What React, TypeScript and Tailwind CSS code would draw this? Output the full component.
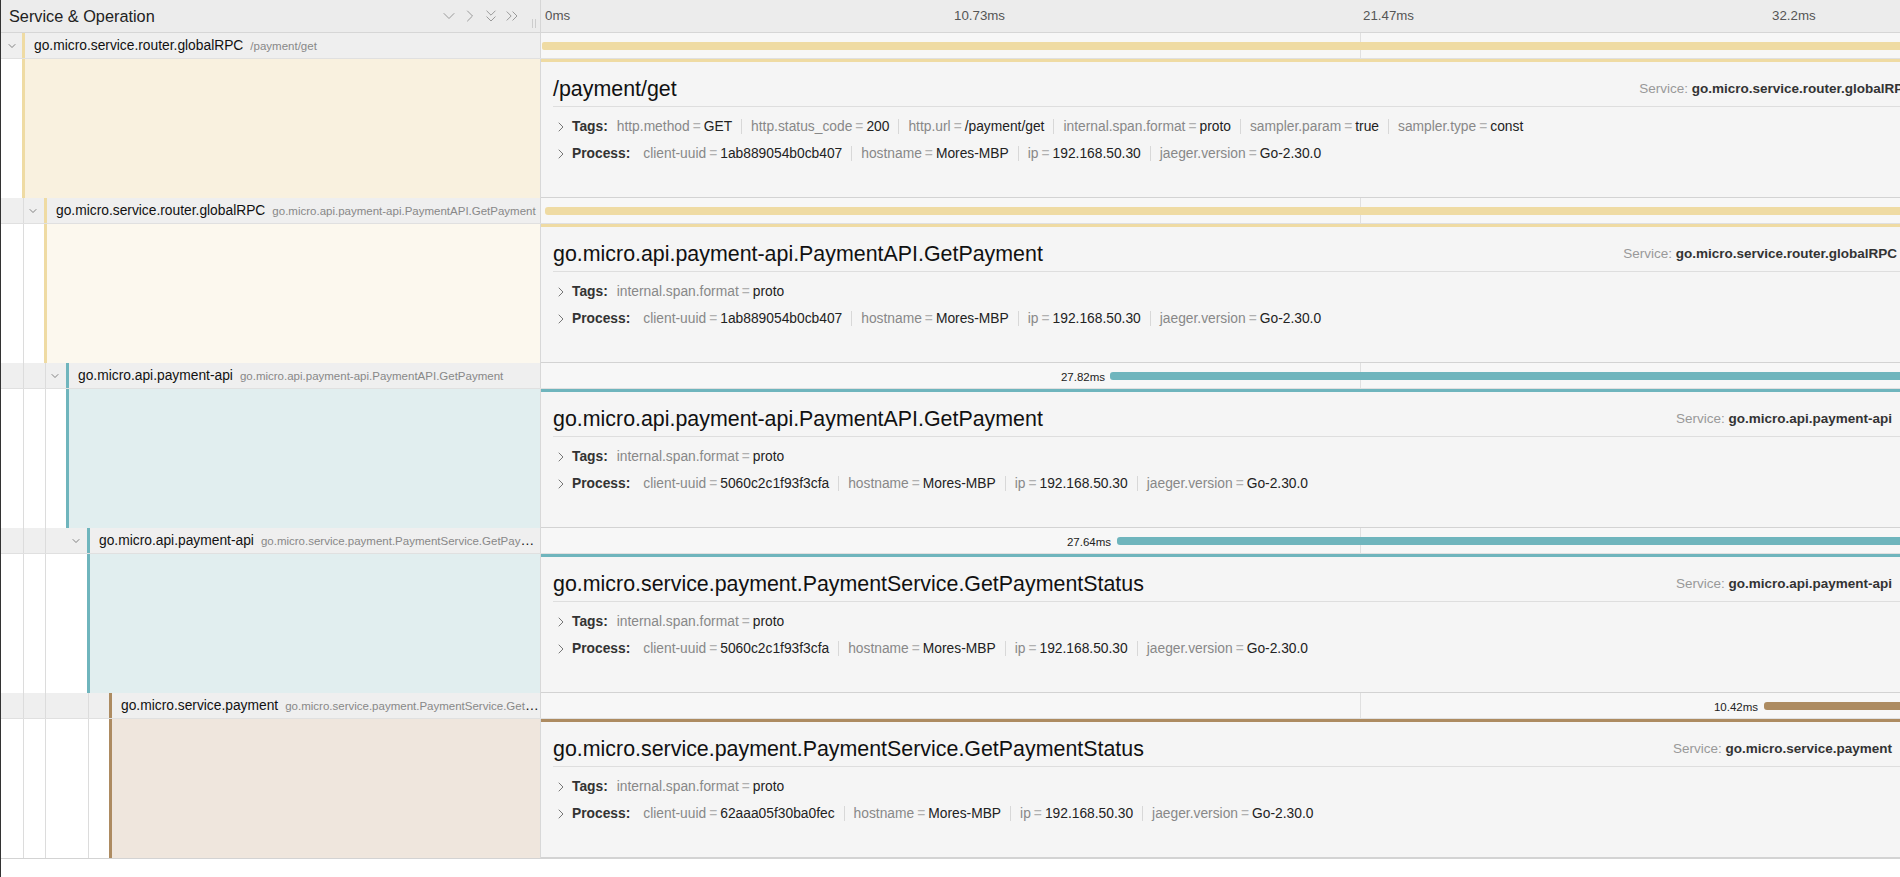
import React from "react";
import { ChevronDown, ChevronRight, ChevronsDown, ChevronsRight } from "lucide-react";

type KV = [string, string];

const Guide = () => <div className="w-px shrink-0 self-stretch bg-[#dcdcdc]" />;
const Sp = ({ w }: { w: string }) => <div className={`${w} shrink-0 self-stretch`} />;
const Bar = ({ c }: { c: string }) => <div className={`w-[3px] shrink-0 self-stretch ${c}`} />;
const Tint = ({ c }: { c: string }) => <div className={`flex-1 self-stretch ${c}`} />;

const Chev = () => (
  <div className="flex w-[12px] shrink-0 items-center justify-center">
    <ChevronDown size={12} strokeWidth={1.6} className="shrink-0 text-[#666]" />
  </div>
);

const RowText = ({ service, op }: { service: string; op: string }) => (
  <div className="ml-[9px] min-w-0 flex-1 truncate text-[13.8px] leading-[25px] text-[#111]">
    {service}
    <span className="ml-[7px] text-[11.5px] text-[#888]">{op}</span>
  </div>
);

const SpanRow = ({ left, timeline }: { left: React.ReactNode; timeline: React.ReactNode }) => (
  <div className="flex h-[26px] shrink-0 border-b border-[#e0e0e0]">
    <div className="flex w-[540px] shrink-0 items-center border-r border-[#d8d8d8] bg-[#efefef]">{left}</div>
    <div className="relative flex min-w-0 flex-1 items-center overflow-hidden bg-[#f7f7f7]">
      <div className="absolute inset-y-0 left-[819px] w-px bg-[#e0e0e0]" />
      {timeline}
    </div>
  </div>
);

const Section = ({ label, items, cls, listCls }: { label: string; items: KV[]; cls: string; listCls: string }) => (
  <div className={`flex h-[21px] items-center whitespace-nowrap text-[13.8px] leading-[15px] ${cls}`}>
    <ChevronRight size={16} strokeWidth={1.5} className="shrink-0 text-[#777]" />
    <span className="ml-[3px] font-bold text-[#333]">{label}</span>
    <div className={`flex items-center ${listCls}`}>
      {items.map(([k, v], i) => (
        <div
          key={k}
          className={
            i === 0
              ? "flex items-center px-[9px]"
              : "flex items-center border-l border-[#d8d8d8] px-[9px]"
          }
        >
          <span className="text-[#888]">{k}</span>
          <span className="px-[3px] text-[#b0b0b0]">=</span>
          <span className="text-[#222]">{v}</span>
        </div>
      ))}
    </div>
  </div>
);

const DetailRow = ({
  left,
  topColor,
  title,
  service,
  serviceCls,
  tags,
  process,
}: {
  left: React.ReactNode;
  topColor: string;
  title: string;
  service: string;
  serviceCls: string;
  tags: KV[];
  process: KV[];
}) => (
  <div className="flex h-[139px] shrink-0">
    <div className="flex w-[540px] shrink-0 border-r border-[#d8d8d8] bg-white">{left}</div>
    <div
      className={`min-w-0 flex-1 overflow-hidden border-t-[3px] border-b border-b-[#d3d3d3] bg-[#f5f5f5] pl-[12px] pt-[12px] ${topColor}`}
    >
      <div className="flex h-[30px] items-center justify-between">
        <div className="whitespace-nowrap text-[21.4px] text-[#111]">{title}</div>
        <div className={`shrink-0 whitespace-nowrap text-[13.5px] ${serviceCls}`}>
          <span className="text-[#999]">Service: </span>
          <span className="font-bold text-[#333]">{service}</span>
        </div>
      </div>
      <div className="mt-[2px] h-px bg-[#dedede]" />
      <Section label="Tags:" items={tags} cls="mt-[9px]" listCls="" />
      <Section label="Process:" items={process} cls="mt-[6px]" listCls="ml-[4px]" />
    </div>
  </div>
);

const procA: KV[] = [
  ["client-uuid", "1ab889054b0cb407"],
  ["hostname", "Mores-MBP"],
  ["ip", "192.168.50.30"],
  ["jaeger.version", "Go-2.30.0"],
];
const procB: KV[] = [
  ["client-uuid", "5060c2c1f93f3cfa"],
  ["hostname", "Mores-MBP"],
  ["ip", "192.168.50.30"],
  ["jaeger.version", "Go-2.30.0"],
];
const procC: KV[] = [
  ["client-uuid", "62aaa05f30ba0fec"],
  ["hostname", "Mores-MBP"],
  ["ip", "192.168.50.30"],
  ["jaeger.version", "Go-2.30.0"],
];
const protoTags: KV[] = [["internal.span.format", "proto"]];

const Header = () => (
  <div className="flex h-[33px] shrink-0 border-b border-[#d6d6d6] bg-[#ececec]">
    <div className="flex w-[540px] shrink-0 items-center border-r border-[#d6d6d6]">
      <span className="ml-[8px] text-[16.3px] text-[#222]">Service &amp; Operation</span>
      <div className="ml-auto flex items-center gap-[1px] text-[#9a9a9a]">
        <ChevronDown size={20} strokeWidth={1.2} />
        <ChevronRight size={20} strokeWidth={1.2} />
        <ChevronsDown size={20} strokeWidth={1.2} />
        <ChevronsRight size={20} strokeWidth={1.2} />
      </div>
      <div className="mb-[4px] ml-[10px] mr-[4px] flex h-[9px] gap-[2px] self-end">
        <div className="w-px bg-[#cdcdcd]" />
        <div className="w-px bg-[#cdcdcd]" />
      </div>
    </div>
    <div className="flex flex-1 items-center whitespace-nowrap text-[13.3px] text-[#555]">
      <div className="w-[409px] shrink-0 pl-[4px]">0ms</div>
      <div className="w-[409px] shrink-0 pl-[4px]">10.73ms</div>
      <div className="w-[409px] shrink-0 pl-[4px]">21.47ms</div>
      <div className="w-[409px] shrink-0 pl-[4px]">32.2ms</div>
    </div>
  </div>
);

const Dur = ({ w, t }: { w: string; t: string }) => (
  <div className={`relative mt-[4px] shrink-0 text-right text-[11.5px] leading-[13px] text-[#222] ${w}`}>{t}</div>
);

export default function App() {
  const Y = "bg-[#efdba3]";
  const T = "bg-[#6fb5bd]";
  const B = "bg-[#ad8b61]";
  return (
    <div className="flex h-[877px] w-[1900px] flex-col overflow-hidden border-l border-l-[#333] bg-white font-['Liberation_Sans',Arial,sans-serif]">
      <Header />

      {/* Row 1 */}
      <SpanRow
        left={
          <>
            <Sp w="w-[5px]" />
            <Chev />
            <Sp w="w-[4px]" />
            <Bar c={Y} />
            <RowText service="go.micro.service.router.globalRPC" op="/payment/get" />
          </>
        }
        timeline={<div className={`relative ml-[1px] h-[8px] flex-1 rounded-l-[2px] ${Y}`} />}
      />
      <DetailRow
        left={
          <>
            <Sp w="w-[21px]" />
            <Bar c={Y} />
            <Tint c="bg-[#f9f1df]" />
          </>
        }
        topColor="border-t-[#efdba3]"
        title="/payment/get"
        service="go.micro.service.router.globalRPC"
        serviceCls="mr-[-13px]"
        tags={[
          ["http.method", "GET"],
          ["http.status_code", "200"],
          ["http.url", "/payment/get"],
          ["internal.span.format", "proto"],
          ["sampler.param", "true"],
          ["sampler.type", "const"],
        ]}
        process={procA}
      />

      {/* Row 2 */}
      <SpanRow
        left={
          <>
            <Sp w="w-[22px]" />
            <Guide />
            <Sp w="w-[3px]" />
            <Chev />
            <Sp w="w-[5px]" />
            <Bar c={Y} />
            <RowText service="go.micro.service.router.globalRPC" op="go.micro.api.payment-api.PaymentAPI.GetPayment" />
          </>
        }
        timeline={<div className={`relative ml-[4px] h-[8px] flex-1 rounded-l-[3px] ${Y}`} />}
      />
      <DetailRow
        left={
          <>
            <Sp w="w-[22px]" />
            <Guide />
            <Sp w="w-[20px]" />
            <Bar c={Y} />
            <Tint c="bg-[#fcf8ee]" />
          </>
        }
        topColor="border-t-[#efdba3]"
        title="go.micro.api.payment-api.PaymentAPI.GetPayment"
        service="go.micro.service.router.globalRPC"
        serviceCls="mr-[3px]"
        tags={protoTags}
        process={procA}
      />

      {/* Row 3 */}
      <SpanRow
        left={
          <>
            <Sp w="w-[22px]" />
            <Guide />
            <Sp w="w-[21px]" />
            <Guide />
            <Sp w="w-[3px]" />
            <Chev />
            <Sp w="w-[5px]" />
            <Bar c={T} />
            <RowText service="go.micro.api.payment-api" op="go.micro.api.payment-api.PaymentAPI.GetPayment" />
          </>
        }
        timeline={
          <>
            <Dur w="w-[569px] pr-[5px]" t="27.82ms" />
            <div className={`relative h-[8px] flex-1 rounded-l-[3px] ${T}`} />
          </>
        }
      />
      <DetailRow
        left={
          <>
            <Sp w="w-[22px]" />
            <Guide />
            <Sp w="w-[21px]" />
            <Guide />
            <Sp w="w-[20px]" />
            <Bar c={T} />
            <Tint c="bg-[#e1eeef]" />
          </>
        }
        topColor="border-t-[#6fb5bd]"
        title="go.micro.api.payment-api.PaymentAPI.GetPayment"
        service="go.micro.api.payment-api"
        serviceCls="mr-[8px]"
        tags={protoTags}
        process={procB}
      />

      {/* Row 4 */}
      <SpanRow
        left={
          <>
            <Sp w="w-[22px]" />
            <Guide />
            <Sp w="w-[21px]" />
            <Guide />
            <Sp w="w-[24px]" />
            <Chev />
            <Sp w="w-[5px]" />
            <Bar c={T} />
            <RowText service="go.micro.api.payment-api" op="go.micro.service.payment.PaymentService.GetPaymentStatus" />
          </>
        }
        timeline={
          <>
            <Dur w="w-[576px] pr-[6px]" t="27.64ms" />
            <div className={`relative h-[8px] flex-1 rounded-l-[3px] ${T}`} />
          </>
        }
      />
      <DetailRow
        left={
          <>
            <Sp w="w-[22px]" />
            <Guide />
            <Sp w="w-[21px]" />
            <Guide />
            <Sp w="w-[41px]" />
            <Bar c={T} />
            <Tint c="bg-[#e1eeef]" />
          </>
        }
        topColor="border-t-[#6fb5bd]"
        title="go.micro.service.payment.PaymentService.GetPaymentStatus"
        service="go.micro.api.payment-api"
        serviceCls="mr-[8px]"
        tags={protoTags}
        process={procB}
      />

      {/* Row 5 */}
      <SpanRow
        left={
          <>
            <Sp w="w-[22px]" />
            <Guide />
            <Sp w="w-[21px]" />
            <Guide />
            <Sp w="w-[42px]" />
            <Guide />
            <Sp w="w-[20px]" />
            <Bar c={B} />
            <RowText service="go.micro.service.payment" op="go.micro.service.payment.PaymentService.GetPaymentStatus" />
          </>
        }
        timeline={
          <>
            <Dur w="w-[1223px] pr-[6px]" t="10.42ms" />
            <div className={`relative h-[8px] flex-1 rounded-l-[3px] ${B}`} />
          </>
        }
      />
      <DetailRow
        left={
          <>
            <Sp w="w-[22px]" />
            <Guide />
            <Sp w="w-[21px]" />
            <Guide />
            <Sp w="w-[42px]" />
            <Guide />
            <Sp w="w-[20px]" />
            <Bar c={B} />
            <Tint c="bg-[#efe6dd]" />
          </>
        }
        topColor="border-t-[#ad8b61]"
        title="go.micro.service.payment.PaymentService.GetPaymentStatus"
        service="go.micro.service.payment"
        serviceCls="mr-[8px]"
        tags={protoTags}
        process={procC}
      />
      <div className="h-px shrink-0 bg-[#d3d3d3]" />
    </div>
  );
}
